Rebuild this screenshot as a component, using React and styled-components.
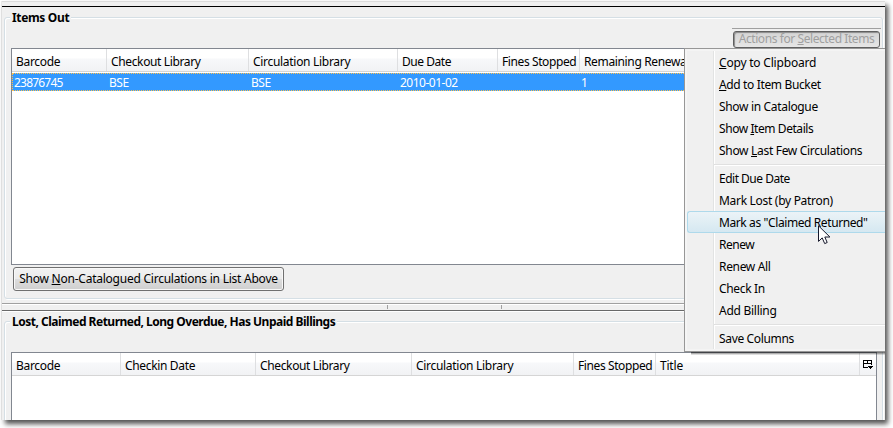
import React from "react";
import styled, { createGlobalStyle } from "styled-components";

const Global = createGlobalStyle`
  * { box-sizing: border-box; }
  html, body { margin: 0; background: #fff; overflow: hidden; }
  body { font: 12px/16px "Noto Sans", sans-serif; color: #000; cursor: default; }
`;

const Stage = styled.div`
  position: relative;
  width: 893px;
  height: 428px;
  padding: 1px 0 0 2px;
  overflow: hidden;
  background: #fff;
`;

const Window = styled.div`
  width: 883px;
  height: 419px;
  overflow: hidden;
  display: flex;
  flex-direction: column;
  background: #f0f0f0;
  border-top: 1px solid #dcdcdc;
  box-shadow: 3px 4px 5px rgba(0, 0, 0, 0.68), -1px 0 0 #ededed;
`;

const TopRule = styled.div`
  flex: none;
  height: 1px;
  margin: 4px 0 3px;
  background: #000;
`;

const Group = styled.fieldset`
  flex: none;
  width: 879px;
  height: ${(p) => p.$height}px;
  min-width: 0;
  margin: 0 0 0 2px;
  padding: 0 5px 0 6px;
  border: 1px solid #d5dfe5;
  border-radius: 3px;
  box-shadow: 1px 1px 0 #fff, inset 1px 1px 0 #fff;
`;

const Legend = styled.legend`
  height: 15px;
  margin: 0 0 0 -1px;
  padding: 0 2px 0 2px;
  line-height: 15px;
  font-weight: 700;
  letter-spacing: ${(p) => p.$track || 0}px;
  background: #f0f0f0;
  white-space: nowrap;
`;

const Toolbar = styled.div`
  display: flex;
  flex-direction: column;
  align-items: flex-end;
  height: 23px;
  padding-top: 3px;
`;

const ToolbarRule = styled.div`
  width: 149px;
  height: 1px;
  margin-right: -4px;
  margin-bottom: 2px;
  background: #a0a0a0;
`;

const MenuButton = styled.button`
  width: 147px;
  height: 17px;
  margin-right: -3px;
  padding: 0 0 1px;
  border: 1px solid #5f5f5f;
  border-radius: 3px;
  background: linear-gradient(#d4d4d4, #e6e6e6);
  box-shadow: inset 1px 1px 1px #8a8a8a;
  color: #a0a0a0;
  font: inherit;
  line-height: 14px;
  letter-spacing: ${(p) => p.$track || 0}px;
  white-space: nowrap;
`;

const PushButton = styled.button`
  display: block;
  width: 271px;
  height: 24px;
  margin: 2px 0 0 2px;
  padding: 0;
  border: 1px solid #707070;
  border-radius: 3px;
  background: linear-gradient(#f2f2f2 0%, #ebebeb 49%, #dddddd 50%, #cfcfcf 100%);
  box-shadow: inset 0 0 0 1px #f8f8f8;
  color: #000;
  font: inherit;
  letter-spacing: ${(p) => p.$track || 0}px;
  white-space: nowrap;
`;

const Table = styled.div`
  width: 866px;
  height: ${(p) => p.$height}px;
  border: 1px solid #828790;
  background: #fff;
  overflow: hidden;
`;

const HeaderRow = styled.div`
  display: flex;
  height: 23px;
  border-bottom: 1px solid #d5d5d5;
  background: linear-gradient(#fff 0, #fff 9px, #f7f8fa 10px, #f1f2f4 22px);
`;

const HeaderCell = styled.div`
  flex: ${(p) => (p.$width ? `0 0 ${p.$width}px` : "1")};
  min-width: 0;
  padding: 0 0 0 4px;
  line-height: 26px;
  letter-spacing: ${(p) => p.$track || 0}px;
  white-space: nowrap;
  border-right: 1px solid #dedfe1;
`;

const PickerCell = styled.div`
  flex: 0 0 16px;
  display: flex;
  align-items: center;
  justify-content: center;
  padding-top: 2px;
`;

const Row = styled.div`
  display: flex;
  height: 18px;
  margin-top: 1px;
  background: #3399ff;
  border: 1px dotted #ffc04c;
  color: #fff;
`;

const Cell = styled.div`
  flex: 0 0 ${(p) => p.$width}px;
  padding-left: ${(p) => (p.$first ? 1 : 0)}px;
  line-height: 18px;
  letter-spacing: ${(p) => p.$track || 0}px;
  white-space: nowrap;
`;

const Splitter = styled.div`
  flex: none;
  display: flex;
  align-items: center;
  height: 8px;
  margin: 4px 0 3px;
  border-top: 1px solid #a0a0a0;
  border-bottom: 1px solid #696969;
  box-shadow: inset 0 1px 0 #fff, 0 1px 0 #fff;
`;

const Tick = styled.i`
  width: 1px;
  height: 4px;
  margin-left: ${(p) => p.$gap}px;
  background: #a0a0a0;
`;

const Menu = styled.div`
  position: absolute;
  left: 684px;
  top: 48px;
  width: 201px;
  height: 304px;
  padding: 2px 0 2px 2px;
  border: 1px solid #979797;
  border-right: 0;
  background: linear-gradient(90deg, #f5f5f5 0 2px, #f0f0f0 2px 28px, #e2e3e3 28px 29px, #fff 29px 30px, #f0f0f0 30px);
  box-shadow: inset 0 2px 0 #f4f4f4, inset 0 -2px 0 #f4f4f4;
`;

const MenuShadow = styled.div`
  position: absolute;
  left: 691px;
  top: 352px;
  width: 194px;
  height: 3px;
  background: linear-gradient(rgba(0, 0, 0, 0.6), rgba(0, 0, 0, 0.04));
`;

const MenuItem = styled.div`
  height: 22px;
  padding-left: ${(p) => (p.$active ? 31 : 32)}px;
  line-height: ${(p) => (p.$active ? 22 : 24)}px;
  letter-spacing: ${(p) => p.$track || 0}px;
  white-space: nowrap;
  border: ${(p) => (p.$active ? "1px solid #aed9eb" : "0")};
  border-right: 0;
  border-radius: 3px 0 0 3px;
  background: ${(p) => (p.$active ? "linear-gradient(#ebf3f7, #d5e8f1)" : "transparent")};
`;

const MenuSeparator = styled.div`
  height: 1px;
  margin: 3px 0 2px 27px;
  background: #e0e0e0;
  box-shadow: 0 1px 0 #fff;
`;

const Key = styled.span`
  text-decoration: underline;
  text-underline-offset: 1px;
  text-decoration-thickness: 1px;
  text-decoration-skip-ink: none;
`;

const Pointer = styled.svg`
  position: absolute;
  left: 818px;
  top: 225px;
`;

const ITEMS_COLUMNS = [
  ["Barcode", 95, -0.3],
  ["Checkout Library", 142, -0.36],
  ["Circulation Library", 149, -0.3],
  ["Due Date", 100, -0.45],
  ["Fines Stopped", 82, -0.4],
  ["Remaining Renewals", 0, -0.35],
];

const BILLING_COLUMNS = [
  ["Barcode", 109, -0.3],
  ["Checkin Date", 135, -0.34],
  ["Checkout Library", 156, -0.36],
  ["Circulation Library", 162, -0.3],
  ["Fines Stopped", 82, -0.4],
  ["Title", 0, -0.2],
];

const ROW = [
  ["23876745", 96, -0.8],
  ["BSE", 142, -0.5],
  ["BSE", 149, -0.5],
  ["2010-01-02", 181, -0.5],
  ["1", 60, 0],
];

const MENU = [
  ["_Copy to Clipboard", -0.2],
  ["_Add to Item Bucket", -0.36],
  ["Show in Catalogue", -0.33],
  ["Show _Item Details", -0.43],
  ["Show _Last Few Circulations", -0.31],
  null,
  ["Edit Due Date", -0.5],
  ["Mark Lost (by Patron)", -0.3],
  ['Mark as "Claimed Returned"', -0.4],
  ["Renew", -0.5],
  ["Renew All", -0.33],
  ["Check In", -0.35],
  ["Add Billing", -0.27],
  null,
  ["Save Columns", -0.34],
];

function Label({ text }) {
  const at = text.indexOf("_");
  if (at < 0) return text;
  return (
    <>
      {text.slice(0, at)}
      <Key>{text[at + 1]}</Key>
      {text.slice(at + 2)}
    </>
  );
}

function Header({ columns }) {
  return (
    <HeaderRow>
      {columns.map(([name, width, track]) => (
        <HeaderCell key={name} $width={width} $track={track}>
          {name}
        </HeaderCell>
      ))}
      <PickerCell>
        <svg width="11" height="10" viewBox="0 0 11 10" shapeRendering="crispEdges">
          <path d="M.5 8V.5h8V5M0 3.5h9M4.5 0v4M0 7.5h5" fill="none" stroke="#000" />
          <path d="M5 6h5v1H9v1H8v1H7V8H6V7H5z" />
        </svg>
      </PickerCell>
    </HeaderRow>
  );
}

export default function App() {
  return (
    <Stage>
      <Global />
      <Window>
        <TopRule />
        <Group $height={289}>
          <Legend $track={-0.35}>Items Out</Legend>
          <Toolbar>
            <ToolbarRule />
            <MenuButton $track={-0.42}>
              <Label text="Actions for _Selected Items" />
            </MenuButton>
          </Toolbar>
          <Table $height={217}>
            <Header columns={ITEMS_COLUMNS} />
            <Row>
              {ROW.map(([text, width, track], i) => (
                <Cell key={i} $width={width} $track={track} $first={i === 0}>
                  {text}
                </Cell>
              ))}
            </Row>
          </Table>
          <PushButton $track={-0.24}>
            <Label text="Show _Non-Catalogued Circulations in List Above" />
          </PushButton>
        </Group>
        <Splitter>
          <Tick $gap={385} />
          <Tick $gap={113} />
        </Splitter>
        <Group $height={130}>
          <Legend $track={-0.5}>Lost, Claimed Returned, Long Overdue, Has Unpaid Billings</Legend>
          <Toolbar />
          <Table $height={100}>
            <Header columns={BILLING_COLUMNS} />
          </Table>
        </Group>
      </Window>
      <MenuShadow />
      <Menu>
        {MENU.map((item, i) =>
          item ? (
            <MenuItem key={i} $active={i === 8} $track={item[1]}>
              <Label text={item[0]} />
            </MenuItem>
          ) : (
            <MenuSeparator key={i} />
          )
        )}
      </Menu>
      <Pointer width="13" height="20" viewBox="0 0 13 20">
        <path d="M.5 .8v15.6l3.7-3.5 2.5 5.7 2.5-1.1-2.4-5.5h5.1z" fill="#fff" stroke="#15182b" />
      </Pointer>
    </Stage>
  );
}
